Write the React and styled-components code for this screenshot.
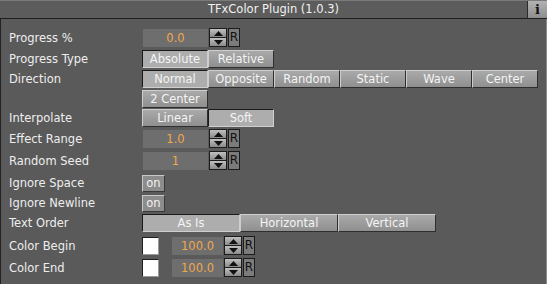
import styled, { createGlobalStyle } from "styled-components"

const GlobalStyle = createGlobalStyle`
  html, body {
    margin: 0;
    padding: 0;
    background: #5a5a5a;
  }
  body {
    font-family: "DejaVu Sans", Verdana, sans-serif;
    font-size: 11.5px;
    color: #eeeeee;
  }
`

export default function App() {
  return (
    <Panel>
      <GlobalStyle />
      <TitleBar>
        <span />
        <Title>TFxColor Plugin (1.0.3)</Title>
        <InfoButton>i</InfoButton>
      </TitleBar>

      <Body>
        <Row $top={0}>
          <Label>Progress %</Label>
          <Controls>
            <NumberField value="0.0" />
          </Controls>
        </Row>

        <Row $top={3}>
          <Label>Progress Type</Label>
          <Controls>
            <Toggle $w={66} $on>Absolute</Toggle>
            <Toggle $w={66}>Relative</Toggle>
          </Controls>
        </Row>

        <Row $top={2}>
          <Label>Direction</Label>
          <Controls $wrap>
            <Toggle $w={66} $on>Normal</Toggle>
            <Toggle $w={66}>Opposite</Toggle>
            <Toggle $w={66}>Random</Toggle>
            <Toggle $w={66}>Static</Toggle>
            <Toggle $w={66}>Wave</Toggle>
            <Toggle $w={66}>Center</Toggle>
            <Toggle $w={66}>2 Center</Toggle>
          </Controls>
        </Row>

        <Row $top={1}>
          <Label>Interpolate</Label>
          <Controls>
            <Toggle $w={66}>Linear</Toggle>
            <Toggle $w={66} $on>Soft</Toggle>
          </Controls>
        </Row>

        <Row $top={3}>
          <Label>Effect Range</Label>
          <Controls>
            <NumberField value="1.0" />
          </Controls>
        </Row>

        <Row $top={4}>
          <Label>Random Seed</Label>
          <Controls>
            <NumberField value="1" />
          </Controls>
        </Row>

        <Row $top={4}>
          <Label>Ignore Space</Label>
          <Controls>
            <OnButton>on</OnButton>
          </Controls>
        </Row>

        <Row $top={2}>
          <Label>Ignore Newline</Label>
          <Controls>
            <OnButton>on</OnButton>
          </Controls>
        </Row>

        <Row $top={2}>
          <Label>Text Order</Label>
          <Controls>
            <Toggle $w={98} $on>As Is</Toggle>
            <Toggle $w={98}>Horizontal</Toggle>
            <Toggle $w={98}>Vertical</Toggle>
          </Controls>
        </Row>

        <Row $top={5}>
          <Label>Color Begin</Label>
          <Controls>
            <Swatch />
            <NumberField value="100.0" $w={51} $offset={12} />
          </Controls>
        </Row>

        <Row $top={4}>
          <Label>Color End</Label>
          <Controls>
            <Swatch />
            <NumberField value="100.0" $w={51} $offset={12} />
          </Controls>
        </Row>
      </Body>
    </Panel>
  )
}

function NumberField({ value, $w = 65, $offset = 0 }) {
  return (
    <FieldGroup $offset={$offset}>
      <Field $w={$w}>{value}</Field>
      <Spinner>
        <SpinHalf>
          <svg width="9" height="5" viewBox="0 0 9 5">
            <polygon points="0,5 9,5 4.5,0" fill="#111" />
          </svg>
        </SpinHalf>
        <SpinHalf>
          <svg width="9" height="5" viewBox="0 0 9 5">
            <polygon points="0,0 9,0 4.5,5" fill="#111" />
          </svg>
        </SpinHalf>
      </Spinner>
      <ResetButton>R</ResetButton>
    </FieldGroup>
  )
}

const Panel = styled.div`
  width: 547px;
  height: 284px;
  background: #5a5a5a;
  display: flex;
  flex-direction: column;
  overflow: hidden;
`

const TitleBar = styled.div`
  box-sizing: border-box;
  height: 19px;
  border-top: 1px solid #7a7a7a;
  border-bottom: 1px solid #1e1e1e;
  background: #5c5c5c;
  display: grid;
  grid-template-columns: 20px 1fr 20px;
  align-items: center;
`

const Title = styled.div`
  text-align: center;
  color: #f2f2f2;
  line-height: 17px;
`

const InfoButton = styled.div`
  height: 17px;
  width: 19px;
  background: linear-gradient(#b2b2b2, #8e8e8e);
  border-left: 1px solid #2a2a2a;
  color: #111;
  font-family: "DejaVu Serif", "Liberation Serif", serif;
  font-weight: bold;
  font-size: 13px;
  line-height: 17px;
  text-align: center;
`

const Body = styled.div`
  flex: 1;
  border-left: 1px solid #222;
  border-right: 1px solid #8c8c8c;
  padding: 10px 0 0 8px;
  display: flex;
  flex-direction: column;
`

const Row = styled.div`
  display: grid;
  grid-template-columns: 133px 1fr;
  align-items: start;
  margin-top: ${(p) => p.$top}px;
`

const Label = styled.div`
  height: 18px;
  line-height: 18px;
  color: #eeeeee;
  white-space: nowrap;
`

const Controls = styled.div`
  display: flex;
  flex-wrap: ${(p) => (p.$wrap ? "wrap" : "nowrap")};
  row-gap: 2px;
  align-items: flex-start;
  width: 396px;
  height: ${(p) => (p.$wrap ? "auto" : "18px")};
`

const Toggle = styled.div`
  box-sizing: border-box;
  width: ${(p) => p.$w}px;
  height: 18px;
  line-height: 16px;
  text-align: center;
  color: #f4f4f4;
  border: 1px solid;
  border-color: ${(p) =>
    p.$on ? "#1a1a1a #cfcfcf #cfcfcf #1a1a1a" : "#cdcdcd #2e2e2e #2e2e2e #cdcdcd"};
  background: ${(p) =>
    p.$on ? "#adadad" : "linear-gradient(#aaaaaa, #8f8f8f)"};
`

const OnButton = styled.div`
  box-sizing: border-box;
  width: 23px;
  height: 17px;
  margin-top: 1px;
  line-height: 15px;
  text-align: center;
  color: #f2f2f2;
  border: 1px solid;
  border-color: #c8c8c8 #3a3a3a #3a3a3a #c8c8c8;
  background: #8c8c8c;
`

const FieldGroup = styled.div`
  display: flex;
  align-items: flex-start;
  height: 18px;
  margin-left: ${(p) => p.$offset + 1}px;
`

const Field = styled.div`
  width: ${(p) => p.$w}px;
  height: 18px;
  line-height: 18px;
  background: #6e6e6e;
  color: #f0a84c;
  text-align: center;
`

const Spinner = styled.div`
  box-sizing: border-box;
  width: 18px;
  height: 19px;
  margin: -1px 0 0 1px;
  border: 1px solid #1c1c1c;
  display: flex;
  flex-direction: column;
  gap: 1px;
  background: #1c1c1c;
`

const SpinHalf = styled.div`
  flex: 1;
  display: flex;
  align-items: center;
  justify-content: center;
  background: linear-gradient(#c0c0c0, #8a8a8a);
`

const ResetButton = styled.div`
  box-sizing: border-box;
  width: 12px;
  height: 19px;
  margin: -1px 0 0 1px;
  border: 1px solid #1c1c1c;
  background: #7b7b7b;
  color: #111;
  font-size: 12px;
  line-height: 17px;
  text-align: center;
`

const Swatch = styled.div`
  box-sizing: border-box;
  width: 17px;
  height: 18px;
  background: #ffffff;
  border: 1px solid;
  border-color: #1e1e1e #9a9a9a #9a9a9a #1e1e1e;
`
